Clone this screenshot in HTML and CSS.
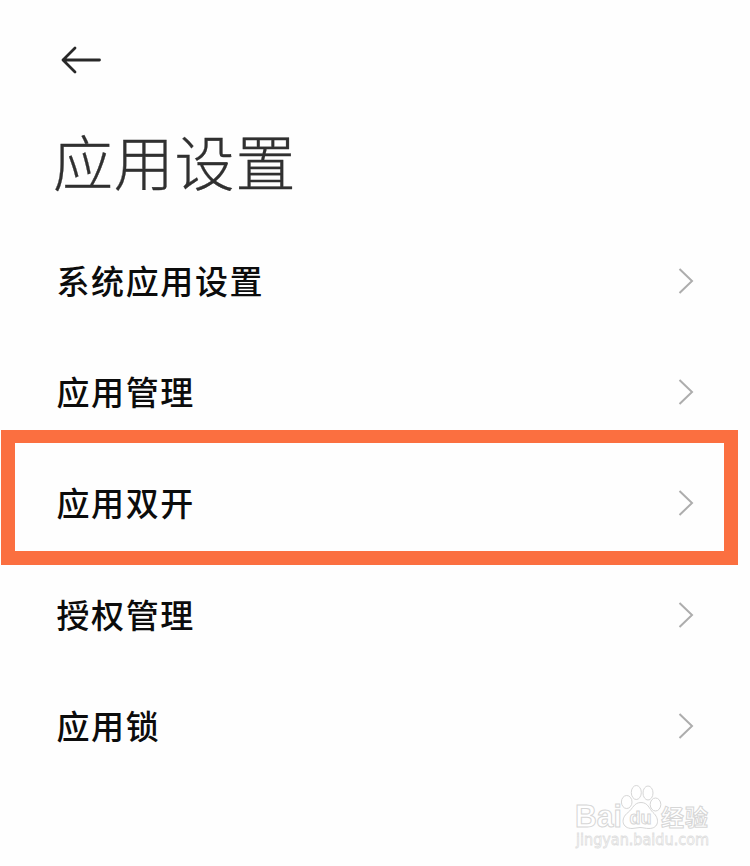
FILE: index.html
```
<!DOCTYPE html>
<html lang="zh-CN">

<head>
  <meta charset="utf-8">
  <title>应用设置</title>
  <link rel="stylesheet" href="styles.css">
</head>

<body>
  <div class="header">
    <a href="#" class="back" aria-label="返回">
      <svg width="42" height="30" viewBox="0 0 42 30">
        <path d="M39.500 15H3M15 3L3 15l12 12"/>
      </svg>
    </a>
    <h1>应用设置</h1>
  </div>

  <ul class="settings">
    <li>
      <span>系统应用设置</span>
      <svg class="chevron" viewBox="0 0 16 28"><path d="M1.500 2L14 14 1.500 26"/></svg>
    </li>
    <li>
      <span>应用管理</span>
      <svg class="chevron" viewBox="0 0 16 28"><path d="M1.500 2L14 14 1.500 26"/></svg>
    </li>
    <li class="highlight">
      <span>应用双开</span>
      <svg class="chevron" viewBox="0 0 16 28"><path d="M1.500 2L14 14 1.500 26"/></svg>
    </li>
    <li>
      <span>授权管理</span>
      <svg class="chevron" viewBox="0 0 16 28"><path d="M1.500 2L14 14 1.500 26"/></svg>
    </li>
    <li>
      <span>应用锁</span>
      <svg class="chevron" viewBox="0 0 16 28"><path d="M1.500 2L14 14 1.500 26"/></svg>
    </li>
  </ul>

  <svg class="watermark" width="150" height="70" viewBox="0 0 150 70">
    <text class="brand" x="4" y="46" textLength="47" lengthAdjust="spacingAndGlyphs">Bai</text>
    <ellipse cx="55.700" cy="21" rx="5.300" ry="6.500"/>
    <ellipse cx="65.300" cy="11.500" rx="5" ry="7"/>
    <ellipse cx="77" cy="12" rx="5" ry="7"/>
    <ellipse cx="84.500" cy="23.500" rx="5.300" ry="6.500"/>
    <path d="M70 21.500c7 0 8 6 12 10 7 6 6 16-4 16-4 0-6-1-9-1s-5 1-8 1c-10 0-12-10-4-16 5-4 6-10 13-10z"/>
    <text class="du" x="58.500" y="43" textLength="22" lengthAdjust="spacingAndGlyphs">du</text>
    <text class="cn" x="90" y="44.500" textLength="47">经验</text>
    <text class="site" x="5" y="64" textLength="133" lengthAdjust="spacingAndGlyphs">jingyan.baidu.com</text>
  </svg>
</body>

</html>
```
FILE: styles.css
```
body {
  position: relative;
  height: 866px;
  margin: 0;
  overflow: hidden;
  background-color: #fefefe;
  color: #0c0c0c;
  font-family: "Noto Sans CJK SC", sans-serif;
}

.header {
  padding: 45px 53px 0;
}

.back {
  display: block;
  width: 42px;
  height: 30px;
  margin-left: 7px;
}

.back path {
  fill: none;
  stroke: #282828;
  stroke-width: 2.8;
  stroke-linecap: round;
  stroke-linejoin: round;
}

h1 {
  margin: 40px 0 0;
  color: #303030;
  font-size: 60px;
  font-weight: 300;
  line-height: 90px;
  letter-spacing: 0.8px;
  -webkit-text-stroke: 0.3px #303030;
}

.settings {
  margin: 19px 0 0;
  padding: 0;
  list-style: none;
}

.settings li {
  position: relative;
  display: flex;
  align-items: center;
  justify-content: space-between;
  height: 111.3px;
  padding: 0 56px 0 56.5px;
  font-size: 33px;
  font-weight: 500;
  letter-spacing: 1.6px;
}

.chevron {
  width: 16px;
  height: 28px;
  margin-top: 2px;
  fill: none;
  stroke: #adadad;
  stroke-width: 2;
}

/* Frame drawn over the row, wider than the row itself. */
.highlight::after {
  content: "";
  position: absolute;
  top: -17px;
  left: 1px;
  box-sizing: border-box;
  width: 737px;
  height: 135px;
  border: 14px solid #fb6f40;
  border-top-width: 13px;
}

.watermark {
  position: absolute;
  top: 781px;
  left: 571px;
  fill: #fff;
  stroke: #d6d6d6;
  stroke-width: 1;
}

.watermark text {
  font-family: "Liberation Sans", sans-serif;
}

.watermark .brand {
  font-size: 31px;
  font-weight: bold;
}

.watermark .du {
  font-size: 18px;
  font-weight: bold;
}

.watermark .cn {
  font-family: "Noto Sans CJK SC", sans-serif;
  font-size: 23px;
  font-weight: bold;
}

.watermark .site {
  font-family: "DejaVu Sans", sans-serif;
  font-size: 15px;
  stroke: #dedede;
  stroke-width: 0.8;
}
```
